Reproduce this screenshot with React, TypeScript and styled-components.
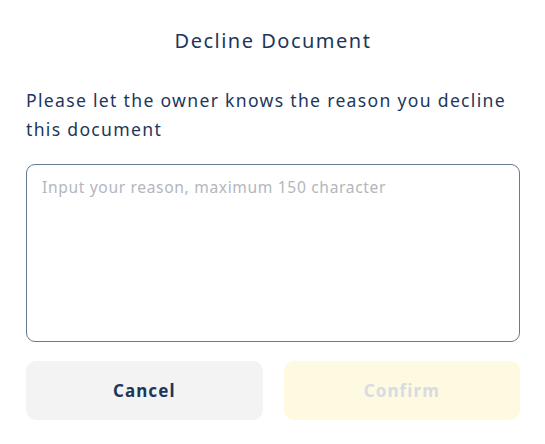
import React from "react";
import styled, { createGlobalStyle } from "styled-components";

const Global = createGlobalStyle`
  html, body { margin: 0; padding: 0; background: #ffffff; }
  body { font-family: "Noto Sans", "Lato", sans-serif; }
`;

const Dialog = styled.div`
  width: 545px;
  height: 444px;
  box-sizing: border-box;
  padding: 26px 25px 0 26px;
  display: flex;
  flex-direction: column;
  background: #ffffff;
`;

const Title = styled.h2`
  margin: 0;
  text-align: center;
  font-size: 20px;
  font-weight: 400;
  line-height: 30px;
  letter-spacing: 1.5px;
  color: #1d365b;
`;

const Message = styled.p`
  margin: 30px 0 0;
  font-size: 17.6px;
  line-height: 29px;
  letter-spacing: 1.3px;
  color: #1d365b;
`;

const Reason = styled.textarea`
  margin-top: 20px;
  height: 178px;
  box-sizing: border-box;
  border: 1px solid #667a95;
  border-radius: 9px;
  padding: 11px 15px;
  resize: none;
  font-family: inherit;
  font-size: 15.6px;
  line-height: 22px;
  letter-spacing: 0.65px;
  color: #1d365b;
  outline: none;
  &::placeholder { color: #b3b6bd; }
`;

const Actions = styled.div`
  margin-top: 19px;
  display: grid;
  grid-template-columns: 1fr 1fr;
  gap: 21px;
`;

const Button = styled.button<{ $variant: "cancel" | "confirm" }>`
  height: 59px;
  border: none;
  border-radius: 10px;
  font-family: inherit;
  font-size: 17px;
  font-weight: 700;
  letter-spacing: 1.1px;
  cursor: pointer;
  background: ${(p) => (p.$variant === "cancel" ? "#f3f3f3" : "#fef9e1")};
  color: ${(p) => (p.$variant === "cancel" ? "#1d365b" : "#d8dbe1")};
`;

export default function App() {
  return (
    <>
      <Global />
      <Dialog>
        <Title>Decline Document</Title>
        <Message>Please let the owner knows the reason you decline this document</Message>
        <Reason placeholder="Input your reason, maximum 150 character" />
        <Actions>
          <Button $variant="cancel">Cancel</Button>
          <Button $variant="confirm" disabled>Confirm</Button>
        </Actions>
      </Dialog>
    </>
  );
}
